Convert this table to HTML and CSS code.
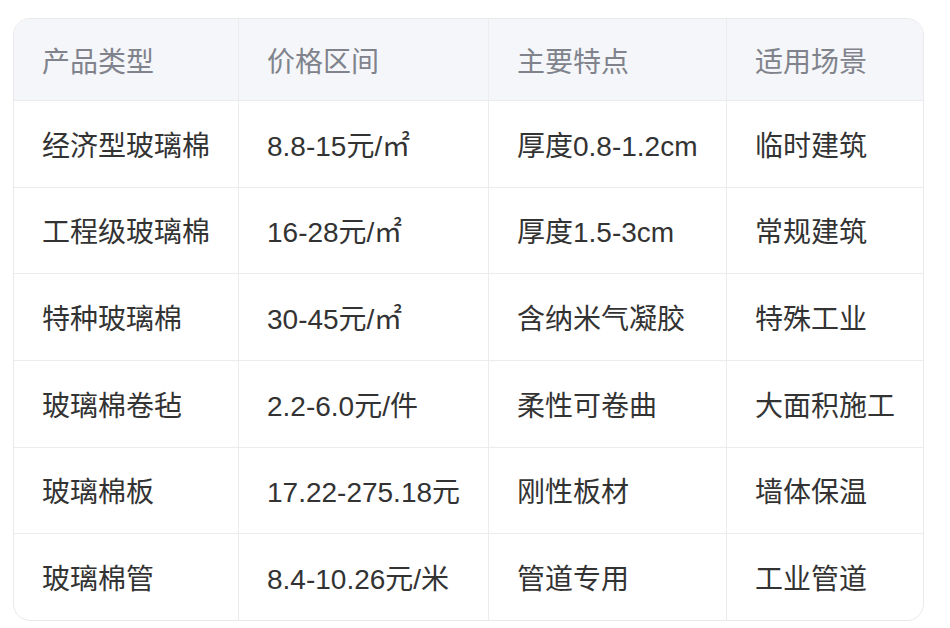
FILE: index.html
```html
<!DOCTYPE html>
<html lang="zh-CN">
<head>
<meta charset="utf-8">
<link rel="stylesheet" href="styles.css">
</head>
<body>
<div class="table-wrap">
  <table class="price-table">
    <colgroup>
      <col class="c1"><col class="c2"><col class="c3"><col class="c4">
    </colgroup>
    <thead>
      <tr><th>产品类型</th><th>价格区间</th><th>主要特点</th><th>适用场景</th></tr>
    </thead>
    <tbody>
      <tr><td>经济型玻璃棉</td><td>8.8-15元/<span class="unit">㎡</span></td><td>厚度0.8-1.2cm</td><td>临时建筑</td></tr>
      <tr><td>工程级玻璃棉</td><td>16-28元/<span class="unit">㎡</span></td><td>厚度1.5-3cm</td><td>常规建筑</td></tr>
      <tr><td>特种玻璃棉</td><td>30-45元/<span class="unit">㎡</span></td><td>含纳米气凝胶</td><td>特殊工业</td></tr>
      <tr><td>玻璃棉卷毡</td><td>2.2-6.0元/件</td><td>柔性可卷曲</td><td>大面积施工</td></tr>
      <tr><td>玻璃棉板</td><td>17.22-275.18元</td><td>刚性板材</td><td>墙体保温</td></tr>
      <tr><td>玻璃棉管</td><td>8.4-10.26元/米</td><td>管道专用</td><td>工业管道</td></tr>
    </tbody>
  </table>
</div>
</body>
</html>
```

FILE: styles.css
```css
html, body {
  margin: 0;
  padding: 0;
  background: #ffffff;
}

body {
  font-family: "Liberation Sans", "Noto Sans CJK SC", sans-serif;
}

.table-wrap {
  margin: 18px 0 0 13px;
  width: 909px;
  border: 1px solid #e9e9ec;
  border-radius: 17px;
  overflow: hidden;
}

.price-table {
  width: 100%;
  border-collapse: separate;
  border-spacing: 0;
  table-layout: fixed;
  font-size: 28px;
}

.c1 { width: 224px; }
.c2 { width: 250px; }
.c3 { width: 238px; }
.c4 { width: 197px; }

.price-table th,
.price-table td {
  text-align: left;
  padding: 0 0 0 28px;
  white-space: nowrap;
  border-left: 1px solid #ececef;
}

.price-table th:first-child,
.price-table td:first-child {
  border-left: none;
  padding-left: 28px;
}

.price-table th {
  height: 81px;
  background: #f5f6f9;
  color: #80838c;
  font-weight: normal;
}

.price-table td {
  height: 85.67px;
  border-top: 1px solid #ececef;
  color: #333333;
}

.unit {
  font-family: "DejaVu Sans", sans-serif;
}
```
